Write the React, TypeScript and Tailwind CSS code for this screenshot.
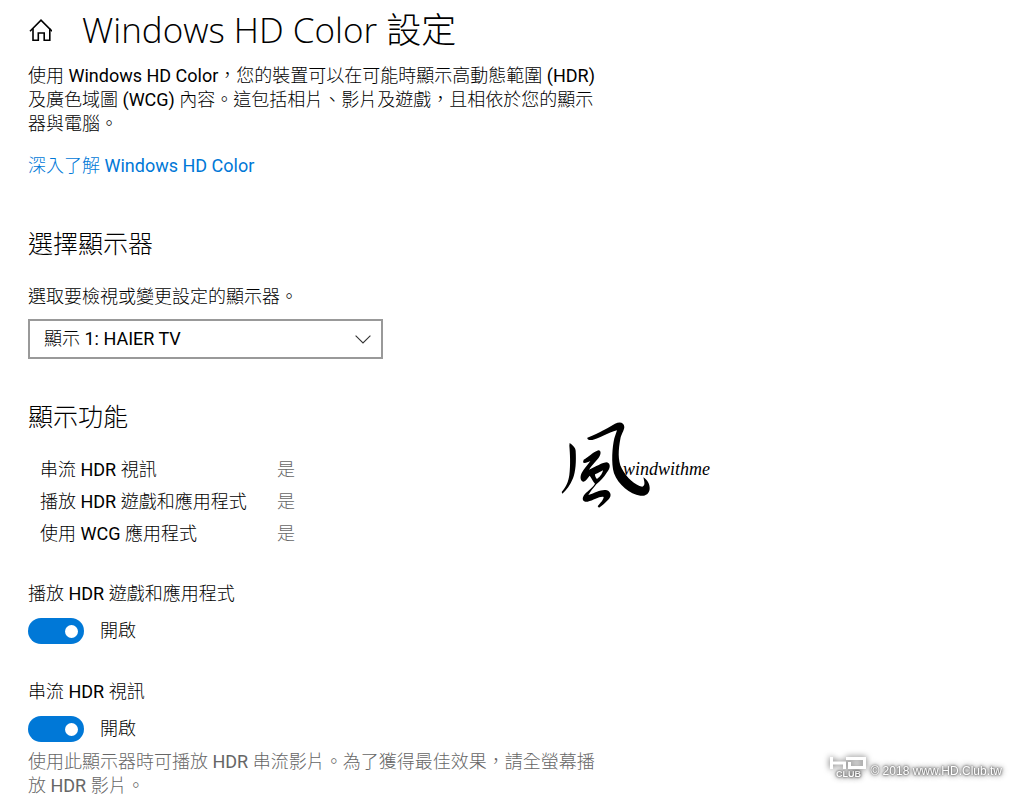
import React from "react";

const features = [
  { label: "串流 HDR 視訊", value: "是" },
  { label: "播放 HDR 遊戲和應用程式", value: "是" },
  { label: "使用 WCG 應用程式", value: "是" },
];

const HomeIcon: React.FC = () => (
  <svg width="24" height="24" viewBox="0 0 24 24" fill="none" stroke="currentColor" strokeWidth="1.6">
    <path d="M2 13.2 13 2.2 24 13.2" />
    <path d="M5 10.5V22.2H10.3V15H16.2V22.2H21.8V10.5" />
  </svg>
);

const ChevronDown: React.FC = () => (
  <svg
    className="pointer-events-none absolute right-3 top-4"
    width="16"
    height="9"
    viewBox="0 0 16 9"
    fill="none"
    stroke="#333333"
    strokeWidth="1.1"
  >
    <path d="M0.6 0.6 8 8 15.4 0.6" />
  </svg>
);

interface ToggleProps {
  id: string;
  label: string;
  hint?: string;
}

const Toggle: React.FC<ToggleProps> = ({ id, label, hint }) => (
  <div>
    <label htmlFor={id} className="block">
      {label}
    </label>
    <div className="mt-3 flex items-center gap-4">
      <input
        id={id}
        type="checkbox"
        role="switch"
        defaultChecked
        className="flex h-[26px] w-14 appearance-none items-center rounded-full bg-[#767676] px-[6px] before:size-[13px] before:rounded-full before:bg-white checked:justify-end checked:bg-[#0078d7]"
      />
      <span>開啟</span>
    </div>
    {hint && <p className="mt-2 text-[#666666]">{hint}</p>}
  </div>
);

const Signature: React.FC = () => (
  <div className="absolute left-[555px] top-[415px] flex items-center">
    <svg width="100" height="95" viewBox="0 0 300 285" fill="black">
      <path d="M44 84C52 90 62 98 62 108C64 140 62 170 54 190C46 210 34 226 22 236L20 231C34 215 40 200 43 180C47 150 45 115 43 92Z" />
      <path d="M97 68C115 62 150 44 180 26C195 19 207 22 208 36C207 48 199 56 196 72C190 105 188 135 200 160C215 188 240 212 262 215C272 212 268 200 265 187C277 194 285 208 284 222C282 238 270 244 256 242C225 238 190 210 177 175C168 145 172 95 178 70L186 46C160 52 130 72 112 75C102 76 96 74 97 68Z" />
      <path d="M86 134C100 128 112 112 130 106C140 106 138 120 130 130C120 142 108 154 102 164C122 156 142 142 156 142C168 146 166 160 156 172C146 188 136 198 124 208C114 220 106 230 100 240C122 234 138 222 156 226C170 232 170 246 158 256C150 264 142 272 132 278L128 274C136 264 146 254 146 246C136 242 116 256 98 260C84 262 80 252 86 242C94 230 112 220 120 206C114 200 110 190 104 182C98 188 94 198 86 200C76 200 74 186 80 174C86 162 98 150 106 138C98 142 88 146 84 142Z" />
      <path d="M120 178C130 174 140 168 144 166C142 178 132 188 126 192C122 188 120 184 120 178Z" fill="white" />
    </svg>
    <span className="-ml-8 mt-3 font-['Liberation_Serif',serif] text-lg italic">windwithme</span>
  </div>
);

const SiteMark: React.FC = () => (
  <div className="fixed bottom-[18px] right-[22px] flex items-end gap-1 font-['Liberation_Sans',sans-serif] text-white [text-shadow:0_0_2px_#666666,0_0_3px_#666666,0_0_5px_#777777,0_0_7px_#888888]">
    <div className="flex flex-col items-center">
      <svg
        className="overflow-visible drop-shadow-[0_0_3px_#555555]"
        width="36"
        height="12"
        viewBox="0 0 36 12"
        fill="none"
        stroke="currentColor"
        strokeWidth="3"
      >
        <path d="M1.5 0V12M1.5 6H14.5V12M16 1.5H34.5V10.5H19.5V5" />
      </svg>
      <span className="text-[9px] font-bold leading-[10px]">CLUB</span>
    </div>
    <span className="text-xs">© 2018 www.HD.Club.tw</span>
  </div>
);

const App: React.FC = () => {
  return (
    <div
      lang="zh-Hant"
      className="relative min-h-screen bg-white px-7 font-['Roboto','Noto_Sans_CJK_TC_Light','Noto_Sans_CJK_TC',sans-serif] text-lg leading-6 text-black"
    >
      <header className="flex h-[60px] items-center gap-[30px]">
        <a href="#home" aria-label="首頁">
          <HomeIcon />
        </a>
        <h1 className="font-['Open_Sans','Noto_Sans_CJK_TC',sans-serif] text-[35px] font-light leading-[60px]">
          Windows HD Color 設定
        </h1>
      </header>

      <main className="max-w-[574px]">
        <p className="mt-1">
          使用 Windows HD Color，您的裝置可以在可能時顯示高動態範圍 (HDR) 及廣色域圖 (WCG)
          內容。這包括相片、影片及遊戲，且相依於您的顯示器與電腦。
        </p>
        <a href="#learn-more" className="mt-[18px] block w-fit text-[#0078d7]">
          深入了解 Windows HD Color
        </a>

        <section className="mt-[51px]">
          <h2 className="text-[25px] leading-8">選擇顯示器</h2>
          <label htmlFor="display" className="mt-6 block">
            選取要檢視或變更設定的顯示器。
          </label>
          <div className="relative mt-[10px] max-w-[355px]">
            <select id="display" className="h-10 w-full appearance-none border-2 border-[#999999] bg-white px-[14px]">
              <option>顯示 1: HAIER TV</option>
            </select>
            <ChevronDown />
          </div>
        </section>

        <section className="mt-[43px]">
          <h2 className="text-[25px] leading-8">顯示功能</h2>
          <table className="ml-3 mt-5">
            <tbody>
              {features.map((feature) => (
                <tr key={feature.label} className="h-8">
                  <th scope="row" className="w-[237px] p-0 text-left font-normal">
                    {feature.label}
                  </th>
                  <td className="p-0 text-[#666666]">{feature.value}</td>
                </tr>
              ))}
            </tbody>
          </table>
        </section>

        <section className="mt-8 flex flex-col gap-9">
          <Toggle id="hdr-games" label="播放 HDR 遊戲和應用程式" />
          <Toggle
            id="hdr-video"
            label="串流 HDR 視訊"
            hint="使用此顯示器時可播放 HDR 串流影片。為了獲得最佳效果，請全螢幕播放 HDR 影片。"
          />
        </section>
      </main>

      <Signature />
      <SiteMark />
    </div>
  );
};

export default App;
